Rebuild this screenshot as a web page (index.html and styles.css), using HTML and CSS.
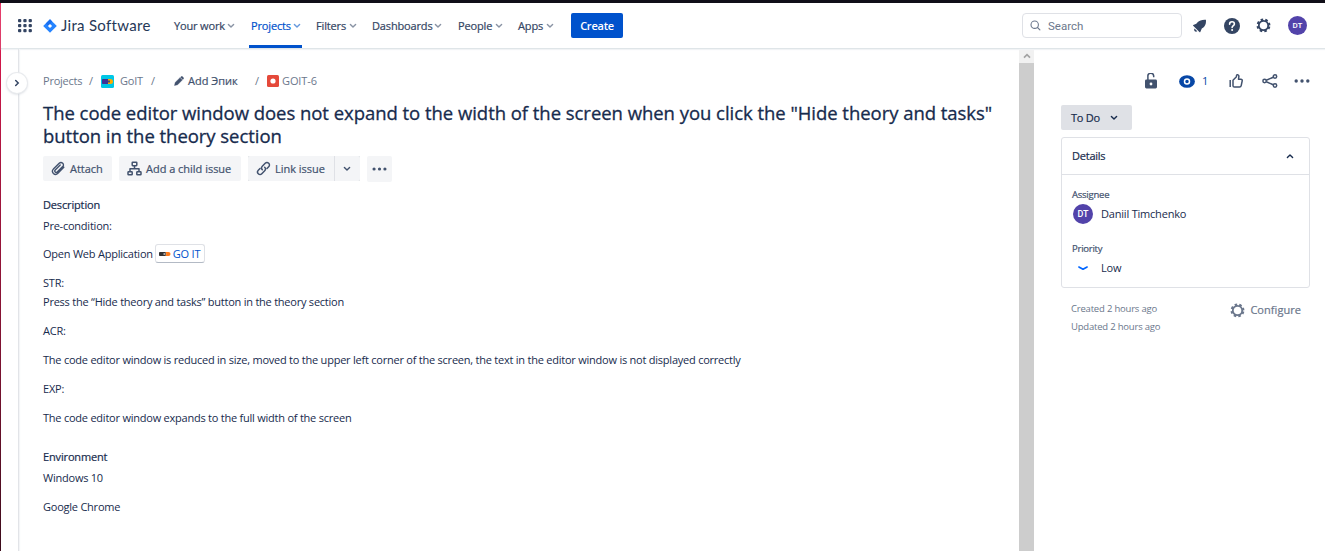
FILE: index.html
```
<!DOCTYPE html>
<html lang="en">
<head>
<meta charset="utf-8">
<title>GOIT-6 - Jira Software</title>
<link rel="stylesheet" href="styles.css">
</head>
<body>
<svg class="defs" width="0" height="0">
  <symbol id="chev" viewBox="0 0 8 6"><path d="M1.400 1.500 4 4.100 6.600 1.500" fill="none" stroke="currentColor" stroke-width="1.400" stroke-linecap="round" stroke-linejoin="round"/></symbol>
  <symbol id="gear" viewBox="0 0 16 16"><circle cx="8" cy="8" r="5" fill="none" stroke="currentColor" stroke-width="1.900"/><circle cx="8" cy="8" r="6.300" fill="none" stroke="currentColor" stroke-width="2.200" stroke-dasharray="2.650 2.300" stroke-dashoffset="-1.150"/></symbol>
  <symbol id="dots" viewBox="0 0 16 4"><g fill="currentColor"><circle cx="2.200" cy="2" r="1.700"/><circle cx="8" cy="2" r="1.700"/><circle cx="13.800" cy="2" r="1.700"/></g></symbol>
</svg>
<div class="window">
  <header class="topnav">
    <svg class="switcher" width="14" height="14" viewBox="0 0 14 14"><g fill="#344563"><rect x="0" y="0" width="3.300" height="3.300" rx="1"/><rect x="5.300" y="0" width="3.300" height="3.300" rx="1"/><rect x="10.600" y="0" width="3.300" height="3.300" rx="1"/><rect x="0" y="5" width="3.300" height="3.300" rx="1"/><rect x="5.300" y="5" width="3.300" height="3.300" rx="1"/><rect x="10.600" y="5" width="3.300" height="3.300" rx="1"/><rect x="0" y="10" width="3.300" height="3.300" rx="1"/><rect x="5.300" y="10" width="3.300" height="3.300" rx="1"/><rect x="10.600" y="10" width="3.300" height="3.300" rx="1"/></g></svg>
    <div class="brand">
      <svg width="14" height="14" viewBox="0 0 14 14"><path d="M7 .2 13.800 7 7 13.800.2 7Z" fill="#2684ff"/><path d="M7 .2 9.200 2.500 7 5.200 5.200 7 2.800 4.400Z" fill="#1a6ff0"/><path d="M7 4.900 9.100 7 7 9.100 4.900 7Z" fill="#fff"/></svg>
      <span class="brand-name">Jira Software</span>
    </div>
    <nav class="menu">
      <a class="item work"><span>Your work</span><svg width="8" height="6"><use href="#chev"/></svg></a>
      <a class="item projects active"><span>Projects</span><svg width="8" height="6"><use href="#chev"/></svg></a>
      <a class="item filters"><span>Filters</span><svg width="8" height="6"><use href="#chev"/></svg></a>
      <a class="item dashboards"><span>Dashboards</span><svg width="8" height="6"><use href="#chev"/></svg></a>
      <a class="item people"><span>People</span><svg width="8" height="6"><use href="#chev"/></svg></a>
      <a class="item apps"><span>Apps</span><svg width="8" height="6"><use href="#chev"/></svg></a>
    </nav>
    <button class="create">Create</button>
    <div class="tools">
      <div class="search"><svg width="11" height="11" viewBox="0 0 11 11"><g fill="none" stroke="#6b778c" stroke-width="1.100" stroke-linecap="round"><circle cx="4.700" cy="4.700" r="3.700"/><path d="m7.500 7.500 2.400 2.400"/></g></svg><span>Search</span></div>
      <svg class="bell" width="14" height="14" viewBox="0 0 14 14"><path d="M12.900.7C9 .4 6.500 1.400 4.600 3.300L3.300 4.700.3 6c-.4.200-.4.500-.1.800l6.200 6.200c.4.400.7.300.9-.1l1.500-3.300 1.600-1.200c2-1.800 2.900-4.100 2.500-7.700Z" fill="#344563"/><path d="M1.500 9.400 4.300 12.200c-.9.700-1.900.6-2.500 0s-.9-1.800-.3-2.800Z" fill="#344563"/></svg>
      <svg class="help" width="16" height="16" viewBox="0 0 16 16"><circle cx="8" cy="8" r="8" fill="#344563"/><path d="M5.600 6.200c0-1.500 1-2.400 2.400-2.400s2.400.9 2.400 2.100c0 1.600-2.300 1.700-2.300 3.500" fill="none" stroke="#fff" stroke-width="1.600" stroke-linecap="round"/><circle cx="8.100" cy="12" r="1" fill="#fff"/></svg>
      <svg class="settings" width="15" height="15"><use href="#gear"/></svg>
      <span class="avatar">DT</span>
    </div>
  </header>
  <div class="body">
    <aside class="rail"><button class="expand"><svg width="6" height="8" viewBox="0 0 6 8"><path d="M1.700 1.500 4.200 4 1.700 6.500" fill="none" stroke="#344563" stroke-width="1.500" stroke-linecap="round"/></svg></button></aside>
    <main class="issue">
      <div class="crumbs">
        <span class="c-projects">Projects</span><span class="c-sep1">/</span>
        <svg class="c-logo" width="13" height="13" viewBox="0 0 13 13"><rect width="13" height="13" rx="1.500" fill="#00c7e5"/><rect x="1" y="4" width="8" height="5" rx=".8" fill="#403294"/><path d="M7 4h2.500a2.500 2.500 0 0 1 0 5H7Z" fill="#ffab00"/><rect x="7" y="5.500" width="2" height="2" fill="#42526e"/></svg>
        <span class="c-goit">GoIT</span><span class="c-sep2">/</span>
        <svg class="c-pencil" width="10" height="10" viewBox="0 0 10 10"><path d="M.5 9.500 1.200 6.400 6 1.700 8.300 4 3.600 8.800Z M6.500 1.200 7.300.5q.5-.4 1 0L9.500 1.700q.5.500 0 1L8.800 3.500Z" fill="#42526e" stroke="#42526e" stroke-width=".4"/></svg>
        <span class="c-epic">Add Эпик</span><span class="c-sep3">/</span>
        <svg class="c-bug" width="12" height="12" viewBox="0 0 12 12"><rect width="12" height="12" rx="1.500" fill="#e5493a"/><circle cx="6" cy="6" r="2.600" fill="#fff"/></svg>
        <span class="c-key">GOIT-6</span>
      </div>
      <h1><span>The code editor window does not expand to the width of the screen when you click the "Hide theory and tasks"</span><br><span>button in the theory section</span></h1>
      <div class="actions">
        <button class="btn attach"><svg width="15" height="15" viewBox="0 0 15 15"><path d="m12.800 6.300-5.900 6c-1.300 1.300-3.200 1.300-4.500.1-1.200-1.200-1.200-3 0-4.300l5.800-5.800c1-1 2.500-1 3.500-.1 1 1 1 2.400 0 3.400L6.200 11c-.6.600-1.500.6-2 0-.6-.6-.5-1.400 0-2l5-5" fill="none" stroke="#42526e" stroke-width="1.400" stroke-linecap="round"/></svg><span>Attach</span></button>
        <button class="btn child"><svg width="15" height="15" viewBox="0 0 15 15"><g fill="none" stroke="#42526e" stroke-width="1.500" stroke-linejoin="round"><rect x="5.200" y="1.200" width="4.600" height="3.500" rx=".6"/><rect x="1" y="10.800" width="4.200" height="3" rx=".6"/><rect x="9.800" y="10.800" width="4.200" height="3" rx=".6"/><path d="M7.500 4.700v3M3 10.500V7.700h9v2.800"/></g></svg><span>Add a child issue</span></button>
        <div class="split"><button class="btn link"><svg width="15" height="15" viewBox="0 0 15 15"><g fill="none" stroke="#42526e" stroke-width="1.500" stroke-linecap="round"><path d="M6.300 8.700C5.200 7.600 5.300 6.200 6.300 5.200l2.900-2.900c1-1 2.500-1 3.500 0s1 2.500 0 3.500L11 7.500"/><path d="M8.700 6.300c1.100 1.100 1 2.500 0 3.500l-2.900 2.900c-1 1-2.500 1-3.500 0s-1-2.500 0-3.500L4 7.500"/></g></svg><span>Link issue</span></button><button class="btn drop"><svg width="8" height="6"><use href="#chev"/></svg></button></div>
        <button class="btn more"><svg width="15" height="4"><use href="#dots"/></svg></button>
      </div>
      <section class="content">
        <h2>Description</h2>
        <p class="pre"><span>Pre-condition:</span></p>
        <p class="open"><span>Open Web Application</span><a class="smartlink"><svg width="12" height="6" viewBox="0 0 12 6"><rect x="0" y="1" width="7" height="4" rx=".8" fill="#333"/><rect x="4.500" y="2" width="2" height="2" fill="#aaa"/><path d="M6.500 1h3a2 2 0 0 1 0 4h-3l.8-2Z" fill="#ff7a1a"/></svg><span>GO IT</span></a></p>
        <p class="str"><span>STR:</span><br><span>Press the “Hide theory and tasks” button in the theory section</span></p>
        <p><span>ACR:</span></p>
        <p><span>The code editor window is reduced in size, moved to the upper left corner of the screen, the text in the editor window is not displayed correctly</span></p>
        <p><span>EXP:</span></p>
        <p><span>The code editor window expands to the full width of the screen</span></p>
        <h2 class="env">Environment</h2>
        <p class="win"><span>Windows 10</span></p>
        <p><span>Google Chrome</span></p>
      </section>
    </main>
    <div class="scrollbar"><div class="up"><svg width="8" height="6" viewBox="0 0 8 6"><path d="m1 4.700 3-3 3 3" fill="none" stroke="#a3a3a3" stroke-width="1.700"/></svg></div></div>
    <aside class="side">
      <div class="side-icons">
        <svg class="i-lock" width="12" height="16" viewBox="0 0 12 16"><rect x="0" y="6.500" width="12" height="9" rx="1.400" fill="#42526e"/><path d="M2.900 7V3.600a2.700 2.700 0 0 1 5.800-.8v1.400" fill="none" stroke="#42526e" stroke-width="1.500"/><circle cx="6" cy="11" r="1.400" fill="#fff"/></svg>
        <svg class="i-eye" width="16" height="13" viewBox="0 0 16 13"><ellipse cx="8" cy="6.500" rx="7.900" ry="6.300" fill="#0747a6"/><circle cx="8" cy="6.500" r="2.500" fill="#0747a6" stroke="#fff" stroke-width="1.500"/></svg>
        <span class="watchers">1</span>
        <svg class="i-like" width="14" height="14" viewBox="0 0 14 14"><g fill="none" stroke="#42526e" stroke-width="1.500" stroke-linejoin="round"><path d="M1.200 6v7"/><path d="M4 6.200 7.200 3c.4-.5.100-1.300.5-1.900.7-.8 2.100-.1 2.200 1L9.500 5.300h2.400c1 0 1.500.7 1.300 1.500l-1 4.800c-.2.900-.7 1.400-1.600 1.400H5.400c-.8 0-1.400-.5-1.400-1.300Z"/></g></svg>
        <svg class="i-share" width="16" height="14" viewBox="0 0 16 14"><g fill="none" stroke="#42526e" stroke-width="1.500"><circle cx="2.600" cy="7" r="1.700"/><circle cx="13" cy="2.500" r="1.700"/><circle cx="13" cy="11.500" r="1.700"/><path d="m4.300 6.200 7-3M4.300 7.800l7 3"/></g></svg>
        <svg class="i-more" width="16" height="4"><use href="#dots"/></svg>
      </div>
      <button class="status"><span>To Do</span><svg width="8" height="6"><use href="#chev"/></svg></button>
      <div class="card">
        <div class="card-head"><span>Details</span><svg class="flip" width="8" height="6"><use href="#chev"/></svg></div>
        <div class="card-body">
          <div class="label">Assignee</div>
          <div class="value"><span class="avatar">DT</span><span>Daniil Timchenko</span></div>
          <div class="label l2">Priority</div>
          <div class="value v2"><svg width="10" height="5" viewBox="0 0 10 5"><path d="M.9 1 5 3.300 9.100 1" fill="none" stroke="#0065ff" stroke-width="1.600" stroke-linecap="round" stroke-linejoin="round"/></svg><span>Low</span></div>
        </div>
      </div>
      <div class="foot">
        <div class="dates"><span>Created 2 hours ago</span><span>Updated 2 hours ago</span></div>
        <div class="configure"><svg width="15" height="15"><use href="#gear"/></svg><span>Configure</span></div>
      </div>
    </aside>
  </div>
</div>
</body>
</html>
```
FILE: styles.css
```
* { box-sizing: border-box; }
body { margin: 0; background: #fff; color: #172b4d; font: 11px/16px "Open Sans", "Noto Sans", sans-serif; letter-spacing: -0.23px; overflow: hidden; }
svg { display: block; flex: none; }
.defs { position: absolute; }
button { font: inherit; letter-spacing: inherit; border: 0; padding: 0; color: inherit; }
span { white-space: nowrap; }
.window { height: 551px; border-top: 3px solid #100e18; border-left: 1px solid; border-image: linear-gradient(#100e18 0 3px, #e5174f 3px, #a5163e 180px, #77122f 380px, #3b0b1b) 3 0 0 1; display: flex; flex-direction: column; }
.topnav { height: 46px; flex: none; display: flex; align-items: center; border-bottom: 1px solid #dfe5e8; box-shadow: 0 1px 1px #f1f3f5; padding: 0 18px 0 17px; position: relative; }
.brand { display: flex; align-items: center; gap: 4px; margin-left: 11px; width: 120px; color: #253858; }
.brand-name { font: 15px/20px Lato, sans-serif; letter-spacing: .3px; position: relative; top: -1px; }
.menu { display: flex; height: 45px; color: #344563; margin-left: 11px; letter-spacing: -.15px; }
.menu, .c-epic, .actions, h2, .status, .card-head, .configure, .label { -webkit-text-stroke: .2px; }
.item { display: flex; align-items: center; justify-content: space-between; height: 45px; }
.item svg { color: #8993a4; }
.work { width: 61px; }
.projects { width: 53px; margin-left: 14px; padding: 3px 1px 0 2px; border-bottom: 3px solid #0052cc; color: #0052cc; }
.projects svg { color: #6699dd; }
.filters { width: 41px; margin-left: 14px; }
.dashboards { width: 70px; margin-left: 15px; }
.people { width: 45px; margin-left: 16px; }
.apps { width: 36px; margin-left: 15px; }
.create { width: 52px; height: 25px; margin-left: 17px; border-radius: 2px; background: #0052cc; color: #fff; font-weight: 600; }
.tools { margin-left: auto; display: flex; align-items: center; }
.search { width: 160px; height: 25px; border: 1px solid #dfe1e6; border-radius: 4px; display: flex; align-items: center; gap: 7px; padding-left: 7px; color: #6b778c; font: 11.500px/16px Roboto, sans-serif; letter-spacing: 0; }
.bell { margin-left: 11px; }
.help { margin-left: 17px; }
.settings { margin-left: 16px; color: #344563; }
.avatar { display: flex; align-items: center; justify-content: center; width: 20px; height: 20px; border-radius: 50%; background: #5243aa; color: #fff; font: 500 9px/20px Roboto, sans-serif; letter-spacing: 0; }
.topnav .avatar { width: 19px; height: 19px; margin-left: 17px; font-size: 8px; }
.body { display: flex; flex: 1; min-height: 0; }
.rail { width: 18px; flex: none; border-right: 1px solid #e2e4e8; box-shadow: 1px 0 1px #f4f5f7; position: relative; }
.expand { position: absolute; left: 6px; top: 24px; width: 20px; height: 20px; border-radius: 50%; background: #fff; box-shadow: 0 0 0 1px #e9ebee, 0 1px 3px #c1c7d0; display: grid; place-items: center; }
.issue { width: 1000px; flex: none; padding: 24px 0 0 24px; }
.crumbs { display: flex; align-items: center; height: 16px; color: #6b778c; }
.c-projects { width: 46px; }
.c-sep1 { width: 12px; }
.c-goit { margin-left: 6px; width: 31px; }
.c-sep2 { width: 23px; }
.c-epic { margin-left: 4px; width: 67px; color: #42526e; letter-spacing: 0; }
.c-sep3 { width: 12px; }
.c-key { margin-left: 3px; letter-spacing: -.1px; }
h1 { margin: 12px 0 0; height: 46px; font-size: 18.500px; line-height: 23px; font-weight: 500; letter-spacing: -.04px; -webkit-text-stroke: .3px; }
.actions { display: flex; margin-top: 9px; height: 26px; color: #42526e; letter-spacing: -.02px; }
.btn { height: 25px; background: #f4f5f7; border-radius: 2px; display: flex; align-items: center; gap: 4px; padding-left: 8px; }
.attach { width: 69px; }
.child { width: 122px; margin-left: 7px; }
.split { display: flex; margin-left: 7px; gap: 1px; background: #dfe1e6; height: 25px; }
.link { width: 86px; border-radius: 2px 0 0 2px; }
.drop { width: 25px; border-radius: 0 2px 2px 0; }
.more { width: 25px; height: 26px; margin-left: 7px; padding-left: 5px; }
h2 { margin: 0; font-size: 11px; line-height: 16px; font-weight: 400; letter-spacing: -.15px; }
.content { margin-top: 15px; }
p { margin: 13px 0 0; line-height: 16px; }
.pre { margin-top: 5px; }
.open { display: flex; align-items: center; height: 19px; margin-top: 10px; gap: 2px; }
.smartlink { width: 50px; height: 19px; border: 1px solid #dfe1e6; border-bottom-color: #b3bac5; border-radius: 3px; display: flex; align-items: center; gap: 2px; padding-left: 3px; color: #0052cc; }
.str { line-height: 19px; margin-top: 10px; }
.str + p { margin-top: 12px; }
.env { margin-top: 23px; }
.win { margin-top: 5px; }
.scrollbar { width: 15px; flex: none; background: #cdcdcd; }
.up { height: 14px; background: #f1f1f1; display: grid; place-items: center; }
.side { flex: 1; padding: 22px 15px 0 27px; }
.side-icons { display: flex; align-items: center; height: 20px; padding-left: 84px; }
.i-eye { margin-left: 22px; }
.watchers { width: 6px; margin-left: 7px; color: #0747a6; }
.i-like { margin-left: 21px; }
.i-share { margin-left: 19px; }
.i-more { margin-left: 16px; color: #42526e; }
.status { width: 71px; height: 25px; margin-top: 14px; background: #dfe1e6; border-radius: 2px; display: flex; align-items: center; justify-content: space-between; padding: 0 14px 0 10px; }
.card { width: 249px; height: 151px; margin-top: 7px; border: 1px solid #dfe1e6; border-radius: 3px; }
.card-head { height: 37px; border-bottom: 1px solid #dfe1e6; display: flex; align-items: center; justify-content: space-between; padding: 0 15px 0 10px; }
.flip { transform: rotate(180deg); }
.card-body { padding: 12px 11px; }
.label { color: #42526e; font-size: 9.500px; line-height: 15px; margin-left: -1px; }
.value { display: flex; align-items: center; height: 20px; margin-top: 2px; gap: 8px; letter-spacing: -.2px; }
.l2 { margin-top: 17px; }
.v2 { padding-left: 5px; gap: 13px; }
.foot { display: flex; justify-content: space-between; padding: 12px 9px 0 10px; color: #6b778c; }
.dates { display: flex; flex-direction: column; font-size: 9.500px; line-height: 18px; letter-spacing: -.2px; }
.configure { display: flex; align-items: center; height: 20px; gap: 5px; letter-spacing: .05px; }
```
